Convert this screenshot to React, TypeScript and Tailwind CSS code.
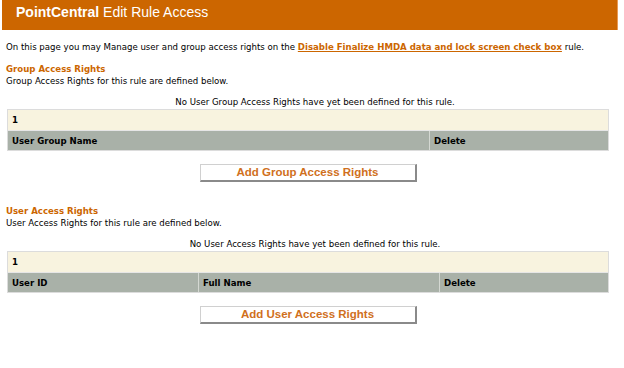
import React from "react";

const orange = "text-[#cc6600]";

function Section({
  title,
  desc,
  empty,
  cols,
  button,
}: {
  title: string;
  desc: string;
  empty: string;
  cols: { label: string; w: string }[];
  button: string;
}) {
  return (
    <div>
      <div className={`pl-[6px] font-bold ${orange}`}>{title}</div>
      <div className="pl-[6px] mt-[2px]">{desc}</div>
      <div className="mt-[11px] text-center pl-[6px]">{empty}</div>
      {/* Grid */}
      <div className="ml-[7px] mr-[15px] mt-[2px] border border-[#dcdcdc] bg-white">
        <div className="h-[20px] bg-[#f8f3df] flex items-center px-[4px] font-bold">1</div>
        <div className="flex h-[20px] border-t border-[#e6e6e6]">
          {cols.map((c, i) => (
            <div
              key={c.label}
              className={`${c.w} bg-[#a9b1a8] flex items-center px-[4px] font-bold ${i > 0 ? "border-l border-[#d4d8d2]" : ""}`}
            >
              {c.label}
            </div>
          ))}
        </div>
      </div>
      <div className="flex justify-center mt-[13px] pr-[8px]">
        <button className="w-[217px] h-[18px] bg-white border border-t-[#d0d0d0] border-l-[#d0d0d0] border-r-[2px] border-b-[2px] border-r-[#8a8a8a] border-b-[#8a8a8a] font-['Liberation_Sans',Arial,sans-serif] text-[11.5px] font-bold text-[#d0701c] leading-none">
          {button}
        </button>
      </div>
    </div>
  );
}

export default function App() {
  return (
    <div className="w-[624px] h-[368px] bg-white font-['DejaVu_Sans',Verdana,sans-serif] text-[8.6px] text-black leading-[10px]">
      {/* Header */}
      <div className="ml-[2px] mr-[6px] h-[30px] bg-[#cc6600] border-r border-[#e89a55] pl-[14px] pt-[3px] font-['Liberation_Sans',Arial,sans-serif] text-[14px] leading-[18px] text-white">
        <span className="font-bold">PointCentral</span> Edit Rule Access
      </div>

      <div className="px-[6px] mt-[12px]">
        On this page you may Manage user and group access rights on the{" "}
        <a className={`font-bold underline ${orange}`} href="#">
          Disable Finalize HMDA data and lock screen check box
        </a>{" "}
        rule.
      </div>

      <div className="mt-[12px]">
        <Section
          title="Group Access Rights"
          desc="Group Access Rights for this rule are defined below."
          empty="No User Group Access Rights have yet been defined for this rule."
          cols={[
            { label: "User Group Name", w: "w-[421px]" },
            { label: "Delete", w: "flex-1" },
          ]}
          button="Add Group Access Rights"
        />
      </div>

      <div className="mt-[24px]">
        <Section
          title="User Access Rights"
          desc="User Access Rights for this rule are defined below."
          empty="No User Access Rights have yet been defined for this rule."
          cols={[
            { label: "User ID", w: "w-[190px]" },
            { label: "Full Name", w: "w-[241px]" },
            { label: "Delete", w: "flex-1" },
          ]}
          button="Add User Access Rights"
        />
      </div>
    </div>
  );
}
